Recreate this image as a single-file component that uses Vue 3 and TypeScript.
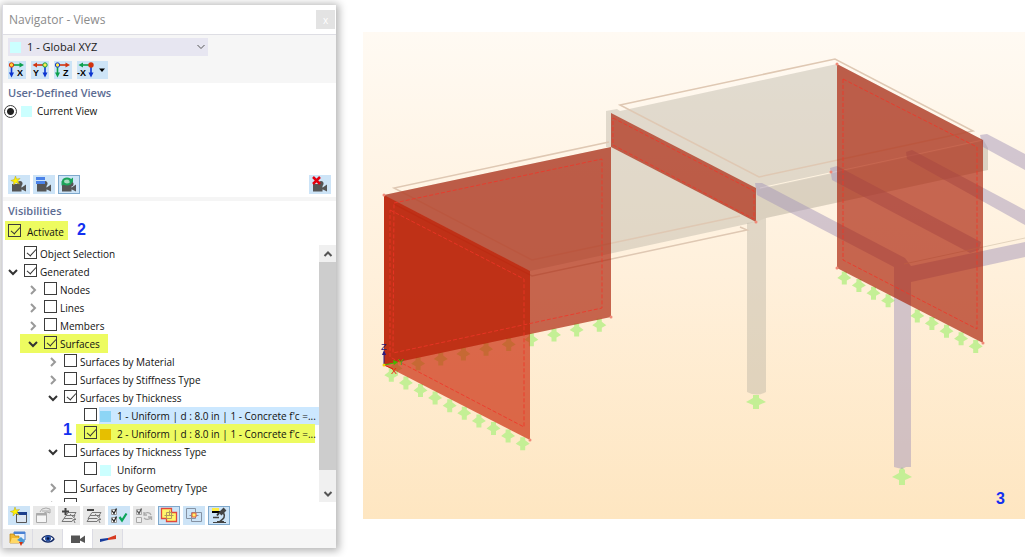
<script setup lang="ts">
import { ref } from 'vue'

interface Row {
  label: string
  depth: number
  checked: boolean
  open?: boolean
  leaf?: boolean
  swatch?: string
  mark?: string
}

const rows = ref<Row[]>([
  { label: 'Object Selection', depth: 0, checked: true, leaf: true },
  { label: 'Generated', depth: 0, checked: true, open: true },
  { label: 'Nodes', depth: 1, checked: false },
  { label: 'Lines', depth: 1, checked: false },
  { label: 'Members', depth: 1, checked: false },
  { label: 'Surfaces', depth: 1, checked: true, open: true, mark: 'mark-surfaces' },
  { label: 'Surfaces by Material', depth: 2, checked: false },
  { label: 'Surfaces by Stiffness Type', depth: 2, checked: false },
  { label: 'Surfaces by Thickness', depth: 2, checked: true, open: true },
  { label: "1 - Uniform | d : 8.0 in | 1 - Concrete f'c =...", depth: 3, checked: false, leaf: true, swatch: 'blue', mark: 'selected' },
  { label: "2 - Uniform | d : 8.0 in | 1 - Concrete f'c =...", depth: 3, checked: true, leaf: true, swatch: 'gold', mark: 'mark-uniform' },
  { label: 'Surfaces by Thickness Type', depth: 2, checked: false, open: true },
  { label: 'Uniform', depth: 3, checked: false, leaf: true, swatch: 'cyan' },
  { label: 'Surfaces by Geometry Type', depth: 2, checked: false },
  { label: 'Surfaces by Mesh Refinement', depth: 2, checked: false },
])

const view = ref('1 - Global XYZ')
const current = ref('current')
const activate = ref(true)

const line = (x: number, y: number, dx: number, dy: number, skip = -1) =>
  Array.from({ length: 10 }, (_, i) => ({ x: x + dx * i, y: y + dy * i })).filter((_, i) => i !== skip)

const backSupports = line(599.3, 325.3, -22.65, 4.8)
const frontSupports = line(391.3, 375.3, 14.6, 7.6)
const rightSupports = line(844.3, 278, 14.6, 7.6, 4)
</script>

<template>
  <div class="page">
    <aside class="panel">
      <header class="title">
        <span>Navigator - Views</span>
        <button class="close" aria-label="Close">x</button>
      </header>

      <div class="axes-area">
        <div class="combo">
          <i class="swatch cyan"></i>
          <select v-model="view" aria-label="View">
            <option>1 - Global XYZ</option>
          </select>
          <svg class="combo-arrow" viewBox="0 0 8 6"><path d="M.5 1 4 4.5 7.5 1" /></svg>
        </div>
        <div class="axis-buttons">
          <button class="axis" aria-label="View in X">
            <svg viewBox="0 0 18 18">
              <path d="M3.500 4H12" stroke="#0da04c" stroke-width="1.600" /><path d="M11.500 1.500 16 4 11.500 6.500z" fill="#0da04c" />
              <path d="M3.500 4V12" stroke="#0b35d0" stroke-width="1.600" /><path d="M1 11.500H6L3.500 16.500z" fill="#0b35d0" />
              <circle cx="3.500" cy="4" r="2.200" fill="#ffd23a" stroke="#d23410" /><text x="9" y="15">X</text>
            </svg>
          </button>
          <button class="axis" aria-label="View in Y">
            <svg viewBox="0 0 18 18">
              <path d="M14 4H5" stroke="#d23410" stroke-width="1.600" /><path d="M6 1.500 1.500 4 6 6.500z" fill="#d23410" />
              <path d="M14 4V12" stroke="#0b35d0" stroke-width="1.600" /><path d="M11.500 11.500H16.500L14 16.500z" fill="#0b35d0" />
              <circle cx="14" cy="4" r="2.200" fill="#ffe94a" stroke="#0da04c" /><text x="2" y="15">Y</text>
            </svg>
          </button>
          <button class="axis" aria-label="View in Z">
            <svg viewBox="0 0 18 18">
              <path d="M3.500 4H12" stroke="#d23410" stroke-width="1.600" /><path d="M11.500 1.500 16 4 11.500 6.500z" fill="#d23410" />
              <path d="M3.500 4V12" stroke="#0da04c" stroke-width="1.600" /><path d="M1 11.500H6L3.500 16.500z" fill="#0da04c" />
              <circle cx="3.500" cy="4" r="2.200" fill="#ffe94a" stroke="#0b35d0" /><text x="9" y="15">Z</text>
            </svg>
          </button>
          <button class="axis wide" aria-label="View in -X">
            <svg viewBox="0 0 31 18">
              <path d="M14 4H5" stroke="#0da04c" stroke-width="1.600" /><path d="M6 1.500 1.500 4 6 6.500z" fill="#0da04c" />
              <path d="M14 4V12" stroke="#0b35d0" stroke-width="1.600" /><path d="M11.500 11.500H16.500L14 16.500z" fill="#0b35d0" />
              <circle cx="14" cy="4" r="2.700" fill="#d23410" /><text x="0" y="15">-X</text>
              <path d="M22 7.500H28L25 11z" fill="#000" />
            </svg>
          </button>
        </div>
      </div>

      <section class="user-views">
        <h2>User-Defined Views</h2>
        <label class="radio-row">
          <input v-model="current" type="radio" name="view" value="current" />
          <i class="swatch cyan"></i>
          <span>Current View</span>
        </label>
      </section>

      <div class="view-buttons">
        <button class="tool" aria-label="New view">
          <svg viewBox="0 0 22 19">
            <path d="M4 9H13.500V16.500H4zM13 13 18 9.500V16.500L13 14z" fill="#555" /><circle cx="12" cy="8.500" r="2.500" fill="#555" />
            <path d="M7.500 1 8.500 4 12 3.500 9.500 6 11.500 9 8 7.500 5.500 10 5.800 6.800 2.800 5.500 6.300 4.500z" fill="#fff200" stroke="#b8a51c" stroke-width=".5" />
          </svg>
        </button>
        <button class="tool" aria-label="Views list">
          <svg viewBox="0 0 22 19">
            <path d="M4 9H13.500V16.500H4zM13 13 18 9.500V16.500L13 14z" fill="#555" /><circle cx="12" cy="8.500" r="2.500" fill="#555" />
            <path d="M3 2H12V5H3zM3 6H12V9H3z" fill="#4b82e8" />
          </svg>
        </button>
        <button class="tool on" aria-label="Refresh view">
          <svg viewBox="0 0 22 19">
            <path d="M4 9H13.500V16.500H4zM13 13 18 9.500V16.500L13 14z" fill="#555" /><circle cx="13" cy="9" r="2.500" fill="#555" />
            <ellipse cx="9" cy="6.500" rx="4" ry="3" fill="#a6dcc0" stroke="#1ca45a" stroke-width="2.200" />
            <path d="M15 2.500V7.500L10.500 6zM3.500 10.500V6L8 9z" fill="#1ca45a" />
          </svg>
        </button>
        <button class="tool last" aria-label="Delete view">
          <svg viewBox="0 0 22 19">
            <path d="M4 9H13.500V16.500H4zM13 13 18 9.500V16.500L13 14z" fill="#555" /><circle cx="12" cy="8.500" r="2.500" fill="#555" />
            <path d="M4 2 11 9M11 2 4 9" stroke="#e3000f" stroke-width="2.500" />
          </svg>
        </button>
      </div>

      <section class="visibilities">
        <h2>Visibilities</h2>
        <div class="activate-row">
          <label class="activate"><input v-model="activate" type="checkbox" /><span>Activate</span></label>
          <b class="callout">2</b>
        </div>
      </section>

      <div class="tree-box">
        <ul class="tree">
          <li v-for="row in rows" :key="row.label" class="row" :class="['depth-' + row.depth, row.mark]">
            <button v-if="!row.leaf" class="chevron" :class="{ open: row.open }" :aria-label="'Toggle ' + row.label">
              <svg viewBox="0 0 10 10"><path v-if="row.open" d="M1 3 5 7 9 3" /><path v-else d="M3 1 7 5 3 9" /></svg>
            </button>
            <span v-else class="chevron"></span>
            <label class="node">
              <input v-model="row.checked" type="checkbox" />
              <span class="name"><i v-if="row.swatch" class="swatch" :class="row.swatch"></i>{{ row.label }}</span>
            </label>
            <b v-if="row.mark === 'mark-uniform'" class="callout one">1</b>
          </li>
        </ul>
        <div class="scroll">
          <button aria-label="Scroll up"><svg viewBox="0 0 10 10"><path d="M1.500 7 5 3.500 8.500 7" /></svg></button>
          <div class="thumb"></div>
          <button aria-label="Scroll down"><svg viewBox="0 0 10 10"><path d="M1.500 3 5 6.500 8.500 3" /></svg></button>
        </div>
      </div>

      <div class="tree-tools">
        <button class="tool" aria-label="New visibility">
          <svg viewBox="0 0 22 19">
            <path d="M8.500 7.500H18.500V16.500H8.500z" fill="#dce6f2" stroke="#555" /><path d="M8 6H19V9H8z" fill="#1c3f8c" />
            <path d="M7 1 8 4 11.500 3.500 9 6 11 9 7.500 7.500 5 10 5.300 6.800 2.300 5.500 5.800 4.500z" fill="#fff200" stroke="#b8a51c" stroke-width=".5" />
          </svg>
        </button>
        <button class="tool off" aria-label="Assign visibility">
          <svg viewBox="0 0 22 19" fill="none" stroke="#aaa">
            <path d="M3.500 7.500H13.500V16.500H3.500z" fill="#f5f5f5" /><path d="M3 8.500H14" stroke-width="2" />
            <path d="M7 6 9 3 13 2 17 3V7L14 6 11 7M9 5H16" />
          </svg>
        </button>
        <button class="tool off" aria-label="Add">
          <svg viewBox="0 0 22 19" fill="none" stroke="#777">
            <path d="M10 6.500H18L16 9.500H8zM8 9.500H17L15 12.500H6zM6 12.500H16L14 15.500H4z" />
            <path d="M12 8 18 13.500 15.500 13.500 17 17" fill="#eee" /><path d="M7.500 2V9M4 5.500H11" stroke="#444" stroke-width="2" />
          </svg>
        </button>
        <button class="tool off" aria-label="Remove">
          <svg viewBox="0 0 22 19" fill="none" stroke="#777">
            <path d="M9 6.500H18L16 9.500H7zM7 9.500H17L15 12.500H5zM6 12.500H16L14 15.500H4z" />
            <path d="M12 8 18 13.500 15.500 13.500 17 17" fill="#eee" /><path d="M4 4H11" stroke="#444" stroke-width="2" />
          </svg>
        </button>
        <button class="tool" aria-label="Check all">
          <svg viewBox="0 0 22 19" fill="none">
            <path d="M3.500 3.500H8.500V8.500H3.500zM3.500 11.500H8.500V16.500H3.500z" fill="#fff" stroke="#999" />
            <path d="M4 4.500 6 7.500 8.500 2.500M4 12.500 6 15.500 8.500 10.500" stroke="#222" stroke-width="1.300" />
            <path d="M11.500 11 14 14.500 18.500 7.500" stroke="#0aa55a" stroke-width="2.200" />
          </svg>
        </button>
        <button class="tool off" aria-label="Invert">
          <svg viewBox="0 0 22 19" fill="none" stroke="#aaa">
            <path d="M3.500 3.500H8.500V8.500H3.500zM3.500 11.500H8.500V16.500H3.500z" fill="#eee" /><path d="M4 4.500 6 7.500 8.500 2.500" stroke="#555" stroke-width="1.300" />
            <path d="M18 9C17 6 13 6 11 8M11 6V9H14M11 12C13 14 17 14 18 11M18.500 14V11H15" stroke-width="1.300" />
          </svg>
        </button>
        <button class="tool on" aria-label="Union">
          <svg viewBox="0 0 22 19" fill="none">
            <path d="M3.500 2.500H13.500V6.500H18.500V15.500H8.500V12.500H3.500z" fill="#fff66b" stroke="#e0483c" stroke-width="1.300" />
            <path d="M8.500 12.500V6.500H13.500V12.500H8.500M11.500 4.500V9.500M6.500 9.500H15.500" stroke="#b09a62" />
          </svg>
        </button>
        <button class="tool" aria-label="Intersection">
          <svg viewBox="0 0 22 19" fill="none" stroke="#8592a3">
            <path d="M3.500 2.500H12.500V12.500H3.500zM8.500 6.500H18.500V15.500H8.500zM6.500 9.500H15.500" /><path d="M9 7H13V11H9z" fill="#fff26b" stroke="#e35b3c" />
          </svg>
        </button>
        <button class="tool on" aria-label="Inspect">
          <svg viewBox="0 0 22 19" fill="none">
            <path d="M4 2H11V5H4z" fill="#ffed45" /><path d="M4 6H12" stroke="#000" stroke-width="2" />
            <path d="M17 3 12 8" stroke="#444" stroke-width="4" /><path d="M11 7 9 9.500" stroke="#333" stroke-width="2" />
            <path d="M15.500 7C18 11 15 13 12 15.500M5 11.500H11" stroke="#444" stroke-width="1.600" /><path d="M5 16.500H18M9 15.500H16" stroke="#444" />
          </svg>
        </button>
      </div>

      <nav class="tabs">
        <button aria-label="Data">
          <svg viewBox="0 0 18 16">
            <path d="M5 1H16V9H5z" fill="#eaf1fb" stroke="#4a82d4" /><path d="M5 1H16V3H5z" fill="#4a82d4" />
            <path d="M1 3H5L6 5H10V12H1z" fill="#f1b72f" stroke="#b57e0c" stroke-width=".7" /><path d="M3 7H12L10 12H1z" fill="#ffd866" />
            <path d="M8 9 12 6 16 10 14 13 10 10z" fill="#4a9ad4" /><path d="M10 11 12 15 14 11z" fill="#d23410" />
          </svg>
        </button>
        <button aria-label="Display">
          <svg viewBox="0 0 18 16">
            <path d="M3 8C6 3.500 12 3.500 15 8 12 12 6 12 3 8z" fill="#fff" stroke="#142a66" stroke-width="1.300" />
            <circle cx="9" cy="7.500" r="3" fill="#2a55a8" /><circle cx="9" cy="7.500" r="1.300" fill="#051440" />
          </svg>
        </button>
        <button class="active" aria-label="Views">
          <svg viewBox="0 0 18 16"><path d="M2 4.500H11V12H2zM11 8 16 4.500V12L11 9.500z" fill="#555" /></svg>
        </button>
        <button aria-label="Results">
          <svg viewBox="0 0 18 16"><path d="M1 11V8L9 7V9z" fill="#173b9c" /><path d="M9 7 17 4V8L9 9z" fill="#d63a20" /></svg>
        </button>
      </nav>
    </aside>

    <main class="canvas">
      <svg class="model" viewBox="363 32 662 487" role="img" aria-label="Structural model">
        <defs>
          <linearGradient id="sky" x1="0" y1="0" x2="0" y2="1">
            <stop offset="0" stop-color="#fffaf3" /><stop offset=".5" stop-color="#fff0db" /><stop offset="1" stop-color="#fee6c1" />
          </linearGradient>
          <path id="support" d="M-2.500-6.500H2.500V-3.500L7 0 2.500 2.500V6.500H-2.500V2.500L-7 0-2.500-3.500z" />
        </defs>
        <rect x="363" y="32" width="662" height="487" fill="url(#sky)" />

        <g class="concrete">
          <path d="M384 195 611 147 756 222 530 271z" />
          <path d="M606 111 617 109 620 111 837 64 983 140 983 139 988 148V170L766 218V392Q757 397 747 392V223L756 222 611 147H606z" />
        </g>
        <path class="gap" d="M760 188 983 140" />
        <path class="shade" d="M756 190 983 141 988 148V170L766 218 756 222z" />
        <path class="outline" d="M609 142 394 188 532 260 740 216M394 204 532 276 747 230 740 227M620 105 835 59 973 131 759 177z" />

        <g class="green">
          <use v-for="(s, i) in backSupports" :key="i" href="#support" :x="s.x" :y="s.y" />
          <use v-for="(s, i) in frontSupports" :key="i" href="#support" :x="s.x" :y="s.y" />
          <use v-for="(s, i) in rightSupports" :key="i" href="#support" :x="s.x" :y="s.y" />
          <path d="M753 395H759V398L766 402 759 405V409H753V405L746 402 753 398z" />
          <path d="M899 470 902 467 905 470V473L912 477 905 480V485H899V480L892 477 899 473z" />
        </g>

        <g class="steel">
          <path d="M755 183 762 183 905 258 911 266 1025 242V257L911 282V467L906 467 902 469 894 467V267L757 195z" />
          <path d="M830 168 837 166 981 242 979 250 970 253 832 180z" />
          <path d="M906 152 912 150 1025 210V225L907 159z" />
          <path d="M980 135 987 134 1025 154V170L983 147z" />
        </g>
        <path class="thin" d="M904 264 1025 238" />

        <g class="wall">
          <path d="M384 195 611 147V317L384 365z" />
          <path d="M611 113 756 188V222L611 147z" />
          <path d="M837 64 983 140V343L837 268z" />
        </g>
        <path class="front-wall" d="M384 195 530 271V440L384 365z" />
        <path class="deep" d="M384 195 530 271V334L384 365z" />

        <path class="dash" d="M394 203 602 159V308L393 353zM390 210 524 279V427L390 357zM613 118 754 191V219L613 145zM843 79 977 147V329L843 260z" />
        <g class="node-dots">
          <circle cx="384" cy="195" r="1.500" /><circle cx="530" cy="440" r="1.500" /><circle cx="611" cy="317" r="1.500" />
          <circle cx="837" cy="64" r="1.500" /><circle cx="837" cy="268" r="1.500" /><circle cx="983" cy="343" r="1.500" />
          <circle cx="831" cy="172" r="1.500" /><circle cx="756" cy="222" r="1.500" />
        </g>

        <g class="origin">
          <path d="M384 365V354" stroke="#2a1c7d" /><path d="M382 355 384 350 386 355z" fill="#2a1c7d" />
          <path d="M384 365 394 363" stroke="#43b800" /><path d="M393 360 398 362 394 365z" fill="#43b800" />
          <path d="M384 365 393 369" stroke="#e02010" /><circle cx="384" cy="365" r="1.500" fill="#f0d000" />
          <text x="381" y="350" fill="#2a1c7d">Z</text><text x="398" y="365" fill="#43a800">Y</text><text x="391" y="374" fill="#f02010">X</text>
        </g>
      </svg>
      <b class="callout three">3</b>
    </main>
  </div>
</template>

<style>
body {
  margin: 0;
  background: #fff;
}
</style>

<style scoped>
* {
  box-sizing: border-box;
}
.page {
  display: flex;
  align-items: flex-start;
  gap: 27px;
  min-height: 100vh;
  padding: 5px 0 0 2px;
  font: 10px/18px "Open Sans", "Noto Sans", sans-serif;
  color: #111;
}
button {
  border: 0;
  padding: 0;
  background: none;
  font: inherit;
  color: inherit;
}
svg {
  display: block;
}
.panel {
  display: flex;
  flex-direction: column;
  flex: 0 0 334px;
  min-width: 0;
  height: calc(100vh - 14px);
  background: #fff;
  border-left: 1px solid #dcdce4;
  box-shadow: 1px 1px 8px 2px rgba(0, 0, 0, .3);
}
.title {
  display: flex;
  align-items: center;
  justify-content: space-between;
  height: 30px;
  padding: 0 1px 0 6px;
  border-bottom: 1px solid #dedee4;
  color: #8b8b8b;
  font-size: 12px;
}
.close {
  width: 19px;
  height: 19px;
  background: #e3e3e3;
  color: #fff;
  font-size: 10px;
  line-height: 16px;
}
.axes-area {
  display: flex;
  flex-direction: column;
  gap: 5px;
  height: 48px;
  padding: 3px 5px;
  background: #f6f6f6;
}
.combo {
  position: relative;
  display: flex;
  align-items: center;
  width: 200px;
  height: 18px;
  padding-left: 2px;
  background: #e7e6f1;
}
.combo select {
  flex: 1;
  height: 18px;
  padding: 0 0 0 6px;
  border: 0;
  appearance: none;
  background: none;
  color: #1b1b1b;
  font: inherit;
  font-size: 11px;
}
.combo-arrow {
  position: absolute;
  right: 3px;
  width: 8px;
  height: 6px;
  fill: none;
  stroke: #555;
}
.swatch {
  flex: none;
  display: block;
  width: 11px;
  height: 11px;
}
.cyan { background: #ccffff; }
.blue { background: #8dd5f5; }
.gold { background: #e6bf00; }
.axis-buttons {
  display: flex;
  gap: 5px;
}
.axis {
  width: 18px;
  height: 18px;
  background: #cde4f7;
}
.axis.wide {
  width: 31px;
}
.axis svg {
  width: 100%;
  height: 18px;
}
.axis text {
  font: bold 9px "Liberation Sans", sans-serif;
}
h2 {
  margin: 0;
  padding-left: 5px;
  color: #5c6c93;
  font-size: 11px;
  font-weight: 600;
  line-height: 20px;
}
.user-views {
  min-height: 92px;
}
.radio-row {
  display: flex;
  align-items: center;
  gap: 4px;
  padding-left: 1px;
  line-height: 16px;
}
.radio-row span {
  padding-left: 1px;
}
input {
  flex: none;
  margin: 0;
  appearance: none;
  background: #fff;
  border: 1px solid #3c3c3c;
}
input[type="radio"] {
  width: 13px;
  height: 13px;
  border-radius: 50%;
  background: radial-gradient(circle, #222 0 3px, #fff 4px);
}
input[type="checkbox"] {
  position: relative;
  width: 13px;
  height: 13px;
}
input[type="checkbox"]:checked::after {
  content: "";
  position: absolute;
  left: 2px;
  top: 2px;
  width: 8px;
  height: 4px;
  border: solid #333;
  border-width: 0 0 1px 1px;
  transform: rotate(-48deg);
}
.view-buttons {
  display: flex;
  gap: 3px;
  padding: 0 5px 3px;
}
.tool {
  width: 22px;
  height: 19px;
  background: #cde4f7;
}
.tool svg {
  width: 22px;
  height: 19px;
}
.tool.on {
  box-shadow: inset 0 0 0 1px #7fa9cd;
}
.tool.off {
  background: #e8e8e8;
}
.last {
  margin-left: auto;
}
.visibilities {
  border-top: 4px solid #f5f5f5;
}
.activate-row {
  display: flex;
  align-items: flex-start;
  gap: 9px;
  height: 24px;
  padding-left: 2px;
}
.activate {
  display: flex;
  align-items: center;
  gap: 6px;
  height: 19px;
  padding: 0 4px 0 3px;
  background: #edfb60;
}
.activate input,
.mark-surfaces input,
.mark-uniform input {
  background: transparent;
}
.activate span {
  padding-top: 2px;
}
.callout {
  color: #1330f0;
  font: bold 16px/17px "Liberation Sans", sans-serif;
}
.tree-box {
  display: flex;
  flex: 1;
  min-height: 0;
  overflow: hidden;
}
.tree {
  flex: 1;
  min-width: 0;
  margin: 0;
  padding: 0;
  list-style: none;
}
.row {
  position: relative;
  display: flex;
  align-items: center;
  gap: 2px;
  height: 18px;
  padding-left: 5px;
  isolation: isolate;
  white-space: nowrap;
}
.depth-1 { padding-left: 25px; }
.depth-2 { padding-left: 45px; }
.depth-3 { padding-left: 65px; }
.chevron {
  flex: none;
  width: 14px;
  height: 16px;
}
.chevron svg {
  width: 10px;
  height: 10px;
  fill: none;
  stroke: #999;
  stroke-width: 2;
}
.chevron.open svg {
  stroke: #333;
}
.node {
  display: flex;
  flex: 1;
  min-width: 0;
  align-items: center;
  height: 18px;
}
.node input {
  margin-bottom: 3px;
}
.name {
  display: flex;
  flex: 1;
  min-width: 0;
  align-items: center;
  gap: 6px;
  height: 18px;
  padding-left: 3px;
}
.selected .name {
  margin-left: 2px;
  padding-left: 1px;
  background: #cce8ff;
}
.mark-surfaces::before,
.mark-uniform::before {
  content: "";
  position: absolute;
  z-index: -1;
  left: 17px;
  top: -1px;
  width: 88px;
  height: 19px;
  background: #edfb60;
}
.mark-uniform::before {
  left: 73px;
  right: 4px;
  width: auto;
}
.one {
  position: absolute;
  left: 60px;
  top: -4px;
}
.scroll {
  display: flex;
  flex: none;
  flex-direction: column;
  width: 17px;
  background: #f0f0f0;
}
.scroll button {
  display: flex;
  align-items: center;
  justify-content: center;
  height: 17px;
}
.scroll svg {
  width: 10px;
  height: 10px;
  fill: none;
  stroke: #555;
  stroke-width: 2;
}
.thumb {
  height: 208px;
  margin-bottom: auto;
  background: #cdcdcd;
}
.tree-tools {
  display: flex;
  gap: 3px;
  padding: 4px 5px;
}
.tabs {
  display: flex;
  height: 19px;
  background: #f6f6f6;
}
.tabs button {
  display: flex;
  align-items: center;
  justify-content: center;
  width: 30px;
  background: #ececec;
  border-right: 1px solid #dcdce4;
}
.tabs .active {
  background: #fff;
}
.tabs svg {
  width: 18px;
  height: 16px;
}
.canvas {
  position: relative;
  flex: 1;
  min-width: 0;
  margin-top: 27px;
}
.model {
  width: 100%;
  height: auto;
}
.three {
  position: absolute;
  right: 20px;
  bottom: 12px;
}
.concrete {
  fill: #b5ae9f;
  fill-opacity: .4;
}
.shade {
  fill: #b5a78c;
  fill-opacity: .12;
}
.gap,
.outline,
.thin,
.dash {
  fill: none;
}
.gap { stroke: #fff3e0; }
.outline { stroke: #dfc8b3; stroke-width: 1.5; }
.thin { stroke: #e3d3bd; }
.dash { stroke: #f03427; stroke-dasharray: 4 2; stroke-opacity: .8; }
.green { fill: #c4ef95; }
.steel { fill: #a698ba; opacity: .5; }
.wall { fill: rgb(167, 26, 2); fill-opacity: .65; }
.front-wall { fill: rgb(200, 33, 0); fill-opacity: .65; }
.deep { fill: #800; fill-opacity: .12; }
.node-dots { fill: #f08a78; }
.origin text { font: 9px "Liberation Sans", sans-serif; }
</style>
